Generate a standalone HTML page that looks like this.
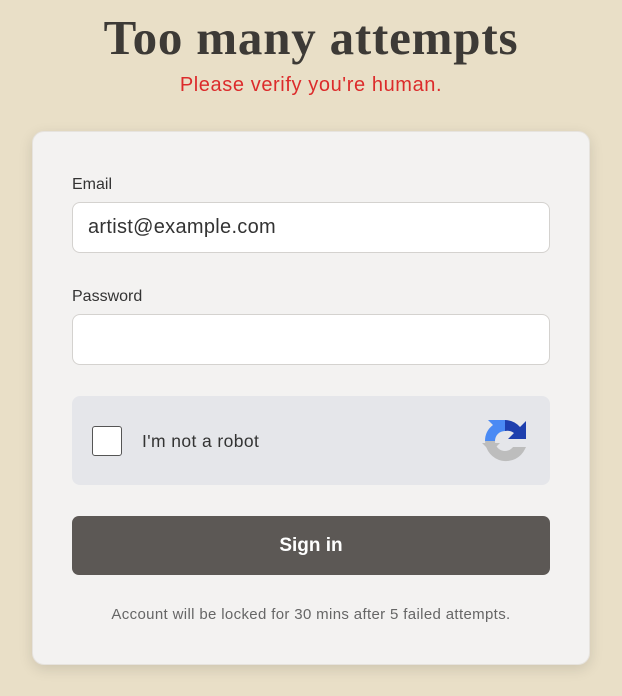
<!DOCTYPE html>
<html><head><style>
*{box-sizing:border-box;margin:0;padding:0}
body{width:622px;height:696px;background:#e9dfc7;font-family:"Liberation Sans",sans-serif;position:relative;overflow:hidden}
h1{position:absolute;top:9px;left:0;width:622px;text-align:center;font-family:"Liberation Serif",serif;font-weight:bold;font-size:49px;color:#3d3a36;letter-spacing:0.8px}
.sub{position:absolute;top:74px;left:0;width:622px;text-align:center;color:#dc2b2b;font-size:20px;letter-spacing:0.6px}
.card{position:absolute;left:32px;top:131px;width:558px;height:534px;background:#f3f2f1;border-radius:12px;box-shadow:0 4px 14px rgba(0,0,0,0.12);border:1px solid #e6e3de}
.lbl{position:absolute;left:39px;font-size:16px;color:#333}
.inp{position:absolute;left:39px;width:478px;height:51px;background:#fff;border:1px solid #d4d2cf;border-radius:8px;font-size:20px;letter-spacing:0.3px;color:#333;padding:13px 0 0 15px}
.cap{position:absolute;left:39px;top:264px;width:478px;height:89px;background:#e5e6ea;border-radius:8px}
.cb{position:absolute;left:20px;top:30px;width:30px;height:30px;border:1.5px solid #555;border-radius:3px;background:#fff}
.ct{position:absolute;left:70px;top:35px;font-size:17.5px;letter-spacing:0.4px;color:#333}
.btn{position:absolute;left:39px;top:384px;width:478px;height:59px;background:#5c5855;border-radius:7px;color:#fff;font-weight:bold;font-size:19px;text-align:center;line-height:59px}
.foot{position:absolute;left:0;top:474px;width:556px;text-align:center;font-size:15px;letter-spacing:0.35px;color:#666}
</style></head><body>
<h1>Too many attempts</h1>
<div class="sub">Please verify you're human.</div>
<div class="card">
<div class="lbl" style="top:44px">Email</div>
<div class="inp" style="top:70px">artist@example.com</div>
<div class="lbl" style="top:156px">Password</div>
<div class="inp" style="top:182px"></div>
<div class="cap"><div class="cb"></div><div class="ct">I'm not a robot</div>
<svg style="position:absolute;left:408px;top:20px" width="50" height="50" viewBox="0 0 50 50">
<path d="M25 4 L25 15 A10 10 0 0 0 15 25 L5 25 A20 20 0 0 1 13 9 L8 4 Z" fill="#4a8af4"/>
<path d="M25 4 A21 21 0 0 1 40 11 L46 5 L46 23 L28 23 L34 17 A11 11 0 0 0 25 15 Z" fill="#1e3fae"/>
<path d="M5 25 L15 25 A10 10 0 0 0 33 31 L25 31 L46 31 L45 33 A21 21 0 0 1 5 25 Z" fill="#bdbdbd"/>
<path d="M2 27 L20 27 L14 33 L8 33 Z" fill="#bdbdbd"/>
</svg></div>
<div class="btn">Sign in</div>
<div class="foot">Account will be locked for 30 mins after 5 failed attempts.</div>
</div>
</body></html>
